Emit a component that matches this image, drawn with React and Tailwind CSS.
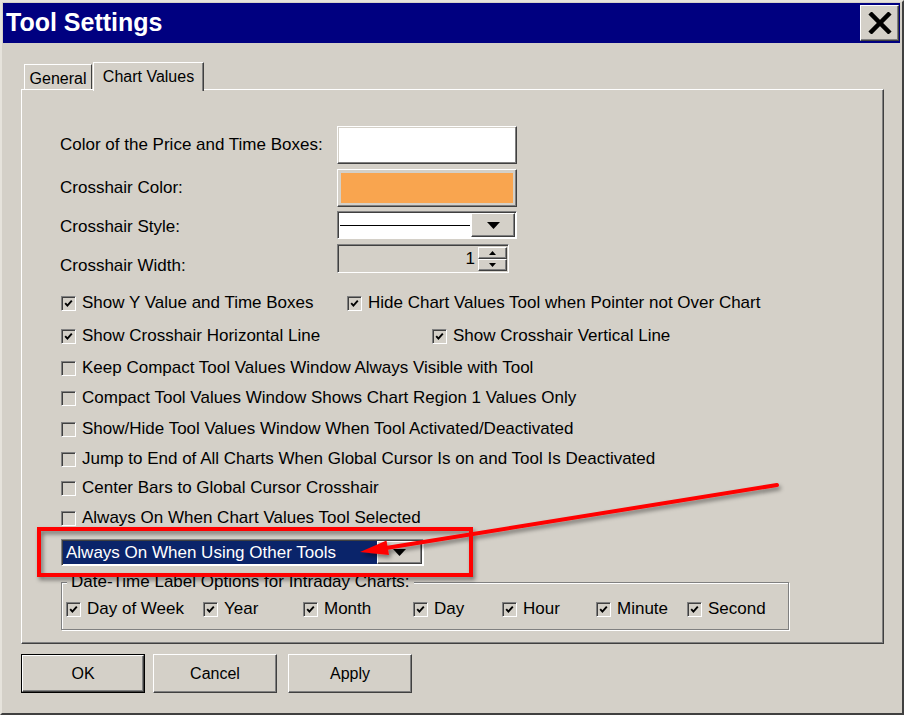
const raised =
  'border border-t-white border-l-white border-b-[#404040] border-r-[#404040] shadow-[inset_-1px_-1px_0_#808080]';
const sunken =
  'border border-t-[#808080] border-l-[#808080] border-b-white border-r-white shadow-[inset_1px_1px_0_#404040]';

function Check({ checked }) {
  return (
    <span className={`flex h-[15px] w-[15px] shrink-0 items-center justify-center bg-[#d4d0c8] ${sunken}`}>
      {checked && (
        <svg width="9" height="9" viewBox="0 0 9 9">
          <path d="M1.2 4.2 L3.4 6.6 L7.8 1.6" stroke="#000" strokeWidth="1.9" fill="none" />
        </svg>
      )}
    </span>
  );
}

function CheckRow({ checked, label, className = '' }) {
  return (
    <div className={`flex h-[30px] items-center gap-[6px] ${className}`}>
      <Check checked={checked} />
      <span className="whitespace-nowrap">{label}</span>
    </div>
  );
}

function DownArrow({ small }) {
  return small ? (
    <svg width="7" height="4" viewBox="0 0 7 4">
      <path d="M0 0h7L3.5 4z" fill="#000" />
    </svg>
  ) : (
    <svg width="13" height="7" viewBox="0 0 13 7">
      <path d="M0 0h13L6.5 7z" fill="#000" />
    </svg>
  );
}

function Btn({ children, isDefault }) {
  return (
    <button
      type="button"
      className={`h-[39px] w-[124px] ${isDefault ? 'border border-black' : ''}`}
    >
      <span className={`flex h-full w-full items-center justify-center bg-[#d4d0c8] ${raised}`}>
        {children}
      </span>
    </button>
  );
}

const rows = [
  { h: 'h-[33px]', items: [{ checked: true, label: 'Show Y Value and Time Boxes', w: 'w-[286px]' }, { checked: true, label: 'Hide Chart Values Tool when Pointer not Over Chart' }] },
  { h: 'h-[32px]', items: [{ checked: true, label: 'Show Crosshair Horizontal Line', w: 'w-[371px]' }, { checked: true, label: 'Show Crosshair Vertical Line' }] },
  { h: 'h-[30px]', items: [{ checked: false, label: 'Keep Compact Tool Values Window Always Visible with Tool' }] },
  { h: 'h-[31px]', items: [{ checked: false, label: 'Compact Tool Values Window Shows Chart Region 1 Values Only' }] },
  { h: 'h-[30px]', items: [{ checked: false, label: 'Show/Hide Tool Values Window When Tool Activated/Deactivated' }] },
  { h: 'h-[29px]', items: [{ checked: false, label: 'Jump to End of All Charts When Global Cursor Is on and Tool Is Deactivated' }] },
  { h: 'h-[30px]', items: [{ checked: false, label: 'Center Bars to Global Cursor Crosshair' }] },
  { h: 'h-[30px]', items: [{ checked: false, label: 'Always On When Chart Values Tool Selected' }] },
];

const dateItems = [
  { label: 'Day of Week', w: 'w-[137px]' },
  { label: 'Year', w: 'w-[100px]' },
  { label: 'Month', w: 'w-[110px]' },
  { label: 'Day', w: 'w-[89px]' },
  { label: 'Hour', w: 'w-[94px]' },
  { label: 'Minute', w: 'w-[91px]' },
  { label: 'Second', w: '' },
];

export default function App() {
  return (
    <div className="relative h-[715px] w-[904px] overflow-hidden border-2 border-t-[#e6e3dc] border-l-[#e6e3dc] border-r-[#404040] border-b-[#404040] bg-[#d4d0c8] font-['Liberation_Sans',Arial,sans-serif] text-[17px] text-black">
      {/* title bar */}
      <div className="ml-[1px] mr-[2px] mt-[1px] flex h-[40px] items-center justify-between bg-[#000080] pl-[3px] pr-[1px]">
        <span className="text-[25px] font-bold text-white">Tool Settings</span>
        <button type="button" className={`flex h-[36px] w-[39px] items-center justify-center bg-[#d4d0c8] ${raised}`}>
          <svg width="24" height="22" viewBox="0 0 24 22">
            <path d="M2 1 L22 21 M22 1 L2 21" stroke="#000" strokeWidth="4.5" />
          </svg>
        </button>
      </div>

      {/* tabs */}
      <div className="mt-[19px] flex h-[27px] items-start pl-[22px] text-[16px]">
        <div className="mt-[2px] flex h-[25px] w-[68px] items-center justify-center border-t border-l border-r border-t-white border-l-white border-r-[#404040] pt-[3px]">
          General
        </div>
        <div className="relative z-10 ml-[1px] flex h-[29px] w-[111px] items-center justify-center border-t border-l border-r border-t-white border-l-white border-r-[#404040] bg-[#d4d0c8] shadow-[inset_-1px_0_0_#808080]">
          Chart Values
        </div>
      </div>

      {/* panel */}
      <div className="ml-[19px] h-[555px] w-[863px] border border-t-white border-l-white border-r-[#404040] border-b-[#404040] pl-[38px] pt-[36px] shadow-[inset_-1px_-1px_0_#808080]">
        <div className="flex h-[38px] items-center">
          <div className="w-[277px]">Color of the Price and Time Boxes:</div>
          <div className={`h-[38px] w-[180px] bg-[#d4d0c8] p-[1px] ${raised}`}>
            <div className="h-full w-full bg-white" />
          </div>
        </div>
        <div className="mt-[5px] flex h-[38px] items-center">
          <div className="w-[277px]">Crosshair Color:</div>
          <div className={`h-[38px] w-[180px] bg-[#d4d0c8] p-[3px] ${raised}`}>
            <div className="h-full w-full bg-[#f9a54f]" />
          </div>
        </div>
        <div className="mt-[4px] flex h-[28px] items-center">
          <div className="w-[277px] pt-[3px]">Crosshair Style:</div>
          <div className={`flex h-[28px] w-[180px] bg-white p-[1px] ${sunken}`}>
            <div className="flex flex-1 items-center px-[1px]">
              <div className="h-[1px] w-full bg-black" />
            </div>
            <div className={`flex w-[44px] items-center justify-center bg-[#d4d0c8] ${raised}`}>
              <DownArrow />
            </div>
          </div>
        </div>
        <div className="mt-[5px] flex h-[29px] items-start">
          <div className="w-[277px] pt-[9px]">Crosshair Width:</div>
          <div className={`flex h-[29px] w-[172px] items-center bg-[#d4d0c8] pr-[1px] ${sunken}`}>
            <span className="flex-1 pr-[3px] text-right">1</span>
            <div className="flex flex-col">
              <div className={`flex h-[12px] w-[29px] items-center justify-center bg-[#d4d0c8] ${raised}`}>
                <svg width="7" height="4" viewBox="0 0 7 4">
                  <path d="M0 4h7L3.5 0z" fill="#000" />
                </svg>
              </div>
              <div className={`flex h-[12px] w-[29px] items-center justify-center bg-[#d4d0c8] ${raised}`}>
                <DownArrow small />
              </div>
            </div>
          </div>
        </div>

        {/* checkbox rows */}
        <div className="ml-[1px] mt-[15px]">
          {rows.map((r, i) => (
            <div key={i} className={`flex items-start ${r.h}`}>
              {r.items.map((it) => (
                <CheckRow key={it.label} checked={it.checked} label={it.label} className={it.w || ''} />
              ))}
            </div>
          ))}
        </div>

        {/* mode combo */}
        <div className={`ml-[1px] mt-[6px] flex h-[27px] w-[363px] bg-white p-[1px] ${sunken}`}>
          <div className="flex flex-1 items-center bg-[#0a246a] pl-[3px] text-white">
            Always On When Using Other Tools
          </div>
          <div className={`flex w-[45px] items-center justify-center bg-[#d4d0c8] ${raised}`}>
            <DownArrow />
          </div>
        </div>

        {/* date-time group */}
        <fieldset className="ml-[1px] mt-[7px] w-[728px] border border-[#808080] pb-[5px] pl-[4px] shadow-[inset_1px_1px_0_#fff,1px_1px_0_#fff]">
          <legend className="ml-[1px] bg-[#d4d0c8] px-[4px] leading-[18px]">
            Date-Time Label Options for Intraday Charts:
          </legend>
          <div className="mt-[3px] flex">
            {dateItems.map((d) => (
              <CheckRow key={d.label} checked label={d.label} className={d.w} />
            ))}
          </div>
        </fieldset>
      </div>

      {/* buttons */}
      <div className="ml-[19px] mt-[10px] flex text-[16px]">
        <Btn isDefault>OK</Btn>
        <div className="ml-[8px]">
          <Btn>Cancel</Btn>
        </div>
        <div className="ml-[11px]">
          <Btn>Apply</Btn>
        </div>
      </div>

      {/* annotation */}
      <svg
        className="pointer-events-none absolute left-[-2px] top-[-2px]"
        width="904"
        height="715"
        viewBox="0 0 904 715"
      >
        <defs>
          <filter id="sh" x="-10%" y="-10%" width="130%" height="150%">
            <feDropShadow dx="2" dy="3" stdDeviation="2" floodColor="#000" floodOpacity="0.45" />
          </filter>
        </defs>
        <g filter="url(#sh)">
          <rect x="39" y="529" width="432" height="46" fill="none" stroke="#ff0000" strokeWidth="4" />
          <line x1="777" y1="485" x2="386" y2="548" stroke="#ff0000" strokeWidth="4" strokeLinecap="round" />
          <polygon points="360,552 386.5,540.5 389,555" fill="#ff0000" />
        </g>
      </svg>
    </div>
  );
}
